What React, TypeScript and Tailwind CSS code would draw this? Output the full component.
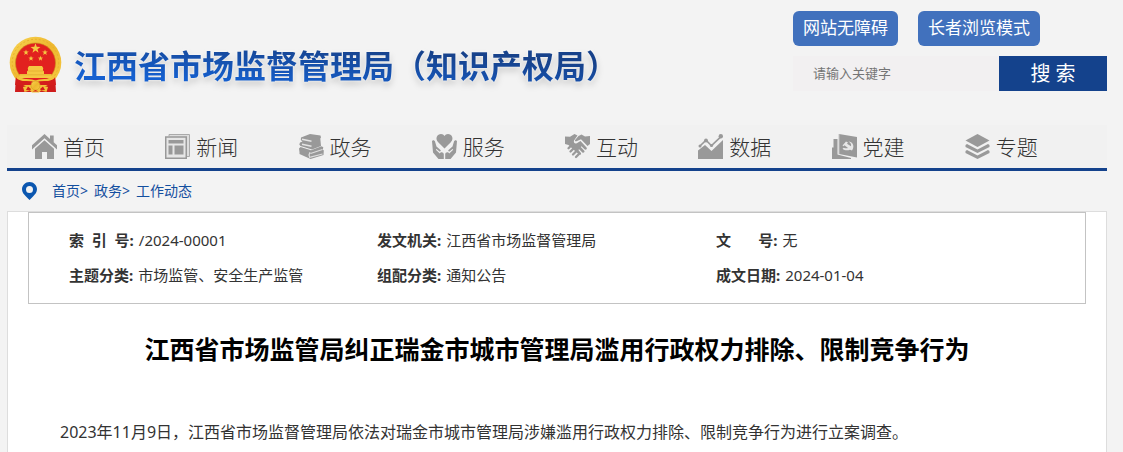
import type { ReactNode } from 'react';

const star = (cx: number, cy: number, r: number) =>
  Array.from({ length: 10 }, (_, i) => {
    const radius = i % 2 === 0 ? r : r * 0.4;
    const angle = (Math.PI / 5) * i - Math.PI / 2;
    return `${(cx + radius * Math.cos(angle)).toFixed(2)},${(cy + radius * Math.sin(angle)).toFixed(2)}`;
  }).join(' ');

function Emblem() {
  return (
    <svg viewBox="0 0 53 57" className="h-[57px] w-[53px] shrink-0" aria-hidden="true">
      <defs>
        <linearGradient id="gold" x1="0" y1="0" x2="1" y2="1">
          <stop offset="0" stopColor="#f8d553" />
          <stop offset="0.5" stopColor="#eeb72e" />
          <stop offset="1" stopColor="#f6cb45" />
        </linearGradient>
      </defs>
      <path d="M7 40 6 56h41l-1-16z" fill="#cf1c1c" />
      <circle cx="26.5" cy="26.5" r="25.8" fill="url(#gold)" />
      <circle cx="26.5" cy="26.5" r="23.2" fill="none" stroke="#e5ab28" strokeWidth="0.8" strokeDasharray="2 2" />
      <circle cx="26.5" cy="27" r="20" fill="#e2211f" stroke="#c98a1b" strokeWidth="0.6" />
      <g fill="#f5c842">
        <polygon points={star(26.5, 12.5, 5.2)} />
        <polygon points={star(17, 16.5, 3)} />
        <polygon points={star(36, 16.5, 3)} />
        <polygon points={star(22, 22.5, 2.8)} />
        <polygon points={star(31.5, 22.5, 2.8)} />
        <path d="M20 30h13l1.500 2.500h-16zM19 32.500h15V35H19zM18 35h17v3h7.500l.5 4H10l.5-4H18z" />
      </g>
      <path d="M18 35h17M10 38.800h33" stroke="#d99d25" strokeWidth="0.5" />
      <path d="M7 41c4 6 12 1 19.500 5C34 42 42 47 46 41l1 8H6z" fill="#d41d1c" />
      <path d="M8 41c5 5.500 11 1 18.500 4.500C34 42 40 46.500 45 41" fill="none" stroke="#f3c23a" strokeWidth="2.200" />
      <path d="m14 51 8-2h9l8 2-1.500 5L32 54.500l-2 2h-7l-2-2-5.500 1.500z" fill="#f3c23a" />
      <circle cx="26.500" cy="49.500" r="4.500" fill="url(#gold)" stroke="#d99d25" strokeWidth="0.7" />
      <path d="m19 50.500 3 2.500-1 1.500-4-.5zM34 50.500l-3 2.500 1 1.500 4-.5zM23.500 55.500l3-1.500 3 1.500z" fill="#d41d1c" />
    </svg>
  );
}

function NavIcon({ children }: { children: ReactNode }) {
  return (
    <svg viewBox="0 0 25 25" fill="#999" className="size-[25px] shrink-0" aria-hidden="true">
      {children}
    </svg>
  );
}

const navItems = [
  {
    name: '首页',
    icon: (
      <>
        <path d="M12.500 0 0 11.300v4.200L12.500 4.300 25 15.500v-4.200l-3.300-3V1.500H18v3.500z" />
        <path d="M3 14.700 12.500 6.200l9.500 8.500V25h-7v-7h-5v7H3z" />
      </>
    ),
  },
  {
    name: '新闻',
    icon: (
      <>
        <path d="M4 2V.5h20.500v22H22" fill="#ddd" stroke="#aaa" />
        <path d="M.75 3h20.500v21.300H.75z" fill="#e6e6e6" stroke="#999" strokeWidth="1.500" />
        <path d="M3.500 6h15v3.500h-15zM3.500 11.500h4v9h-4zM9.500 11.500h9v9h-9z" />
      </>
    ),
  },
  {
    name: '政务',
    icon: (
      <>
        <path d="M2 3.500 11 0l10.500 1.500.5 2-.7 1 .7 7.500-9 3.500L1.500 12 .3 10.500l.7-2 2.500-1L1.800 6z" />
        <path d="m3 5.300 9.500 1.900M3 10.200l9.500 2" fill="none" stroke="#e4e4e4" strokeWidth="1.500" />
        <path d="M0 14.500 1.500 13 12 16.300l10.500-4 1.800 1-.5 2.200 1 1-.3 4.500L11.500 25 .5 20v-1.800z" />
        <path d="m11.500 19.500 12-4M11.500 23.200l12-3.200M11 18.200l-1 2.800 1 3" fill="none" stroke="#dedede" strokeWidth="1.200" />
      </>
    ),
  },
  {
    name: '服务',
    icon: (
      <>
        <path d="M12.500 14.500 6.200 8.300C2.500 4.300 5.400 0 9 0c1.600 0 2.800.8 3.500 2C13.200.8 14.400 0 16 0c3.600 0 6.500 4.300 2.800 8.300z" />
        <path d="M0 7c1-1.500 2.600-.8 3 .5l1.500 5 4 3.500c.8.800-.4 2-1.300 1.300L4.500 15l-.7.8 4 3.700c.8-2 4-1.500 4 .8V25H6.500L1 18.500z" />
        <path d="M25 7c-1-1.500-2.600-.8-3 .5l-1.500 5-4 3.500c-.8.800.4 2 1.300 1.300l2.700-2.300.7.8-4 3.700c-.8-2-4-1.500-4 .8V25h5.300L24 18.500z" />
      </>
    ),
  },
  {
    name: '互动',
    icon: (
      <>
        <path d="m0 2.500 5 .3L9.500 0l3 1.500L9 6.500c-.8 3 2 4 4 2l2.500-1.500 6 6.500c1.200 1.500-.8 3-2 1.800l-3-3-.7.7 3.500 3.700c1 1.300-1 2.800-2.200 1.500l-3-3-.7.8 2.500 3c.8 1.500-1 2.500-2 1.500L3.500 11 0 10z" />
        <path d="m13.500 2 3-1.500L20 2.500l5-.5v8l-2.500 2L16 5.200l-4.500 2C10 7.700 9.600 6.500 10.300 5.700z" />
        <path d="m3.500 14.200 2-2M5.500 17.500l3-3M8 20.500l3-3M11 23l2.500-2.500" fill="none" stroke="#999" strokeWidth="2.300" strokeLinecap="round" />
      </>
    ),
  },
  {
    name: '数据',
    icon: (
      <>
        <path d="M0 16.500 7 11l6.500 6L25 6v19H0z" />
        <path d="M1.500 12.500 8 6.200l5.500 5.500 9.500-9" fill="none" stroke="#999" strokeWidth="1.600" />
        <circle cx="2" cy="12" r="1.500" />
        <circle cx="8" cy="6.500" r="1.900" />
        <circle cx="13.500" cy="11.500" r="1.600" />
        <circle cx="22.800" cy="2.300" r="2.200" />
      </>
    ),
  },
  {
    name: '党建',
    icon: (
      <>
        <path d="M0 13.500h1.500V5h4v15.500L19 24v1H0z" />
        <path d="m7 0 18 3v20.500L7 20z" />
        <path d="M7 0v20" fill="none" stroke="#c4c4c4" strokeWidth="1" />
        <path d="m10.500 11.500 3.500-4 2 1-1 1.200 4 2.600c.5-2-.5-3.800-2.500-4.800 4 .2 6 4 4.300 7.500l-.8 1.500-2-.8c-3 1-5.500.6-7.500-1l1.200-1c2 .8 3 .8 4.300.2l-3.500-2.700-1 1z" fill="#e8e8e8" />
      </>
    ),
  },
  {
    name: '专题',
    icon: (
      <>
        <path d="M12.500 0 24.500 6.500l-12 6.500L.5 6.500z" />
        <path d="m.5 11 1.500-1 10.500 5.500L23 10l1.500 1v2l-12 6-12-6z" />
        <path d="m.5 17 1.500-1 10.500 5.500L23 16l1.500 1v2l-12 6-12-6z" />
      </>
    ),
  },
];

const crumbs = ['首页>', '政务>', '工作动态'];

const details = [
  { label: '索\u00a0\u00a0引\u00a0\u00a0号:', value: '/2024-00001' },
  { label: '发文机关:', value: '江西省市场监督管理局' },
  { label: '文\u00a0\u00a0\u00a0\u00a0\u00a0\u00a0\u00a0号:', value: '无' },
  { label: '主题分类:', value: '市场监管、安全生产监管' },
  { label: '组配分类:', value: '通知公告' },
  { label: '成文日期:', value: '2024-01-04' },
];

export default function App() {
  return (
    <div className="flex min-h-screen flex-col bg-[#f3f3f3] pr-4 pl-[7px] font-['Noto_Sans','Noto_Sans_CJK_SC',sans-serif] text-[#333]">
      <header className="flex h-[125px] items-start justify-between">
        <a href="#" className="ml-0.5 flex items-center gap-3 pt-9">
          <Emblem />
          <span className="bg-linear-[184deg] from-[#17428b] from-30% to-[#1560d0] to-80% bg-clip-text pt-0.5 text-[32px] leading-[48px] font-bold whitespace-nowrap text-transparent [filter:drop-shadow(0_0_1px_#fff)_drop-shadow(0_4px_3px_rgb(0_0_0/0.15))]">
            江西省市场监督管理局（知识产权局）
          </span>
        </a>

        <div className="w-[314px] shrink-0 pt-[11px]">
          <div className="flex gap-5">
            <button type="button" className="h-[35px] rounded-md bg-[#4171bd] px-2.5 pb-0.5 text-[17px] leading-6 text-white">
              网站无障碍
            </button>
            <button type="button" className="h-[35px] rounded-md bg-[#4171bd] px-2.5 pb-0.5 text-[17px] leading-6 text-white">
              长者浏览模式
            </button>
          </div>
          <form className="mt-2.5 flex h-[35px]">
            <input
              type="text"
              aria-label="请输入关键字"
              placeholder="请输入关键字"
              className="min-w-0 flex-1 bg-[#f2f0f1] px-5 text-[13px] outline-none placeholder:text-[#757575]"
            />
            <button type="submit" className="w-[108px] bg-[#14428c] text-xl text-white">
              搜 索
            </button>
          </form>
        </div>
      </header>

      <nav className="grid h-[46px] grid-cols-8 items-center border-b-3 border-[#14428c] bg-[#f1f1f1] pr-[9px] pl-[25px]">
        {navItems.map((item) => (
          <a key={item.name} href="#" className="flex items-center gap-1.5 text-[21px] leading-8 font-light">
            <NavIcon>{item.icon}</NavIcon>
            {item.name}
          </a>
        ))}
      </nav>

      <div className="flex h-10 items-center pl-[15px] text-sm text-[#134f9f]">
        <svg viewBox="0 0 15 18" className="mr-[15px] h-[18px] w-[15px]" aria-hidden="true">
          <path
            d="M7.500 0C3.300 0 0 3.300 0 7.300c0 3 1.800 5 4 7.200L7.500 18l3.500-3.500c2.200-2.200 4-4.200 4-7.200C15 3.300 11.700 0 7.500 0zm0 4a3.500 3.500 0 1 1 0 7 3.500 3.500 0 0 1 0-7z"
            fill="#0b57b0"
            fillRule="evenodd"
          />
        </svg>
        <div className="flex gap-1.5">
          {crumbs.map((crumb) => (
            <a key={crumb} href="#">
              {crumb}
            </a>
          ))}
        </div>
      </div>

      <main className="flex-1 border border-b-0 border-[#ddd] bg-white px-5">
        <dl className="grid grid-cols-[308fr_339fr_369fr] border border-[#c3c3c3] py-2.5 pl-10 text-[15px] leading-[35px]">
          {details.map((item) => (
            <div key={item.label} className="flex gap-[5px]">
              <dt className="font-bold">{item.label}</dt>
              <dd>{item.value}</dd>
            </div>
          ))}
        </dl>
        <h1 className="mt-[27px] text-center text-[25px] leading-9 font-bold text-black">
          江西省市场监管局纠正瑞金市城市管理局滥用行政权力排除、限制竞争行为
        </h1>
        <p className="mt-[51px] px-8 text-base leading-7">
          2023年11月9日，江西省市场监督管理局依法对瑞金市城市管理局涉嫌滥用行政权力排除、限制竞争行为进行立案调查。
        </p>
      </main>
    </div>
  );
}
